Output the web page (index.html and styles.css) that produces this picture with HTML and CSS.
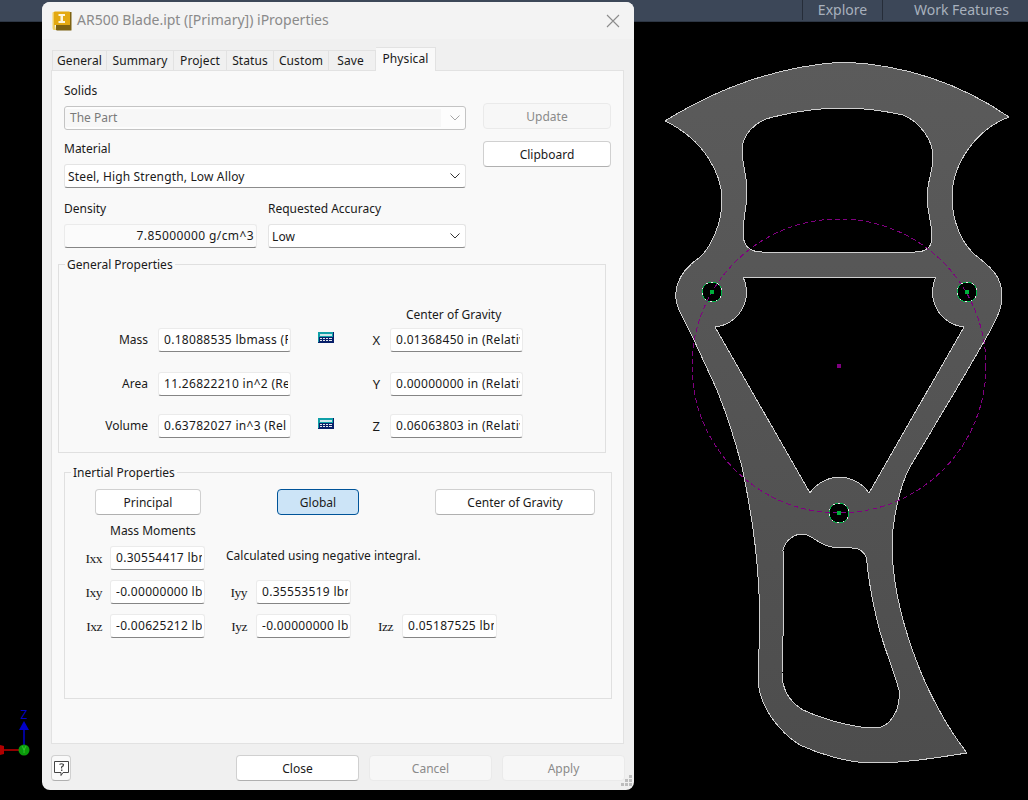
FILE: index.html
```html
<!DOCTYPE html>
<html>
<head>
    <title>AR500 Blade.ipt iProperties</title>
    <link rel="stylesheet" href="styles.css">
</head>
<body>
    <!-- Ribbon strip behind the dialog -->
    <div class="ribbon">
        <span class="ribbon-tab explore">Explore</span>
        <span class="ribbon-tab work">Work Features</span>
    </div>

    <!-- Sketch in the graphics window -->
    <svg class="sketch" width="1028" height="800" viewBox="0 0 1028 800">
        <defs>
            <linearGradient id="plate" x1="0" y1="0" x2="0" y2="1">
                <stop offset="0" stop-color="#5b5b5b"/>
                <stop offset="1" stop-color="#4d4d4d"/>
            </linearGradient>
        </defs>
        <path class="plate" fill="url(#plate)" fill-rule="evenodd" d="M665 121 Q750 68 843 62 Q935 66 1009 117 C975 130 952 165 952 197 C952 222 962 242 973 253 C985 264 1002 272 1002 296 C1002 310 995 322 985 340 L960 383 L910 467 C900 485 892 520 892 548 C893 590 903 628 920 670 C928 690 945 725 967 753 C935 758 905 763 873 763 C845 763 815 752 800 745 C785 736 772 720 767 710 C760 697 758 690 758 670 C760 640 760 600 758 577 C756 545 750 505 742 467 C735 440 725 410 717 390 L693 338 L680 312 C672 296 674 275 700 257 C710 248 722 225 722 200 C722 175 705 140 665 121 Z
        M762 252 L915 252 Q932 252 932 237 C932 222 927 212 927 197 C927 182 933 172 933 157 C933 140 920 122 903 115 C880 110 860 108 843 108 C820 108 793 112 773 117 C755 121 742 135 742 150 C742 165 747 175 747 190 C747 208 743 218 743 233 Q743 252 762 252 Z
        M743 277 L936 277 A35 35 0 0 0 964 327 L869 493 A35.5 35.5 0 0 0 810 493 L715 327 A35 35 0 0 0 743 277 Z
        M783 550 C785 540 795 534 802 534 C812 534 818 545 832 547 L852 548 C862 548 867 555 867 563 C869 585 873 603 877 620 C881 640 892 665 899 690 C901 710 890 728 875 728 C858 728 830 722 803 710 C790 702 782 690 782 673 L784 600 Z"/>
        <circle class="hole" cx="712" cy="292" r="10"/>
        <circle class="hole" cx="967" cy="292" r="10"/>
        <circle class="hole" cx="839" cy="513" r="10"/>
        <circle class="hole-dash" cx="712" cy="292" r="10"/>
        <circle class="hole-dash" cx="967" cy="292" r="10"/>
        <circle class="hole-dash" cx="839" cy="513" r="10"/>
        <circle class="bolt-circle" cx="839" cy="366" r="147"/>
        <rect class="hole-mark" x="710" y="290" width="4" height="4"/>
        <rect class="hole-mark" x="965" y="290" width="4" height="4"/>
        <rect class="hole-mark" x="837" y="511" width="4" height="4"/>
        <rect class="center-mark" x="837" y="364" width="4" height="4"/>

        <!-- Axis triad -->
        <line x1="24" y1="729" x2="24" y2="746" stroke="#0000c8" stroke-width="1.5"/>
        <polygon points="24,721 29,730 19,730" fill="#0000c8"/>
        <text class="axis-z" x="24" y="719">Z</text>
        <line x1="4" y1="750" x2="19" y2="750" stroke="#c00000" stroke-width="1.5"/>
        <polygon points="0,745 4,746 4,754 0,755" fill="#b00000"/>
        <circle cx="24" cy="750" r="5.5" fill="#0a9a0a"/>
        <text class="axis-y" x="24" y="753">Y</text>
    </svg>

    <div class="dialog">
        <div class="titlebar">
            <svg class="app-icon" width="20" height="20" viewBox="0 0 20 20">
                <path d="M4 14 H17 V1 H19.5 V19 Q19.5 19.5 19 19.5 H5 L4 19 Z" fill="#7d6212"/>
                <path d="M0.5 2 Q0.5 1 1.5 1 H3 V15 L4 19 H2 Q0.5 19 0.5 17 Z" fill="#f0cf63"/>
                <path d="M2 1 Q2 0.5 3 0.5 H17 Q18 0.5 18 1.5 V14 H2 Z" fill="#e3a912"/>
                <path d="M6.5 3 H13 V5 H11 V10 H13 V12 H6.5 V10 H8.5 V5 H6.5 Z" fill="#fdf6dc"/>
            </svg>
            <span class="title-text">AR500 Blade.ipt ([Primary]) iProperties</span>
            <svg class="close-x" width="14" height="14" viewBox="0 0 14 14">
                <path d="M1 1 L13 13 M13 1 L1 13" stroke="#8c8c8c" stroke-width="1.1" fill="none"/>
            </svg>
        </div>

        <div class="tabs">
            <span class="tab tab-general">General</span>
            <span class="tab tab-summary">Summary</span>
            <span class="tab tab-project">Project</span>
            <span class="tab tab-status">Status</span>
            <span class="tab tab-custom">Custom</span>
            <span class="tab tab-save">Save</span>
            <span class="tab tab-active">Physical</span>
        </div>

        <div class="panel">
            <div class="top-row">
                <div class="top-left">
                    <div class="label">Solids</div>
                    <div class="combo combo-disabled">
                        <span class="combo-text">The Part</span>
                        <span class="combo-arrow">
                            <svg width="10" height="6" viewBox="0 0 10 6"><path d="M0.5 0.5 L5 5 L9.5 0.5" fill="none" stroke="#a6a6a6" stroke-width="1"/></svg>
                        </span>
                    </div>
                    <div class="label label-next">Material</div>
                    <div class="combo">
                        <span class="combo-text combo-text-tight">Steel, High Strength, Low Alloy</span>
                        <span class="combo-arrow">
                            <svg width="10" height="6" viewBox="0 0 10 6"><path d="M0.5 0.5 L5 5 L9.5 0.5" fill="none" stroke="#333" stroke-width="1"/></svg>
                        </span>
                    </div>
                </div>
                <div class="top-right">
                    <button class="btn btn-disabled btn-side">Update</button>
                    <button class="btn btn-side">Clipboard</button>
                </div>
            </div>

            <div class="density-row">
                <div>
                    <div class="label">Density</div>
                    <div class="field field-right"><span>7.85000000 g/cm^3</span></div>
                </div>
                <div>
                    <div class="label">Requested Accuracy</div>
                    <div class="combo">
                        <span class="combo-text combo-text-tight">Low</span>
                        <span class="combo-arrow">
                            <svg width="10" height="6" viewBox="0 0 10 6"><path d="M0.5 0.5 L5 5 L9.5 0.5" fill="none" stroke="#333" stroke-width="1"/></svg>
                        </span>
                    </div>
                </div>
            </div>

            <fieldset class="group group-general">
                <legend>General Properties</legend>
                <div class="general-grid">
                    <div class="cog-title">Center of Gravity</div>

                    <div class="row-label">Mass</div>
                    <div class="field"><span>0.18088535 lbmass (R</span></div>
                    <div class="calc-cell">
                        <svg class="calc" width="16" height="11" viewBox="0 0 16 11">
                            <rect width="16" height="11" fill="#10a0a8"/>
                            <path d="M0 10 H16 V11 H0 Z M15 0 H16 V11 H15 Z M1 5 H15 V10 H1 Z" fill="#08206a"/>
                            <rect x="2" y="2" width="12" height="2" fill="#cfe6ea"/>
                            <path d="M2 6h2v1H2z M5 6h2v1H5z M8 6h2v1H8z M11 6h3v1h-3z M2 8h2v1H2z M5 8h2v1H5z M8 8h2v1H8z M11 8h3v1h-3z" fill="#e4e8ec"/>
                        </svg>
                    </div>
                    <div class="axis-label">X</div>
                    <div class="field"><span>0.01368450 in (Relativ</span></div>

                    <div class="row-label">Area</div>
                    <div class="field"><span>11.26822210 in^2 (Re</span></div>
                    <div class="calc-cell"></div>
                    <div class="axis-label">Y</div>
                    <div class="field"><span>0.00000000 in (Relativ</span></div>

                    <div class="row-label">Volume</div>
                    <div class="field"><span>0.63782027 in^3 (Rel</span></div>
                    <div class="calc-cell">
                        <svg class="calc" width="16" height="11" viewBox="0 0 16 11">
                            <rect width="16" height="11" fill="#10a0a8"/>
                            <path d="M0 10 H16 V11 H0 Z M15 0 H16 V11 H15 Z M1 5 H15 V10 H1 Z" fill="#08206a"/>
                            <rect x="2" y="2" width="12" height="2" fill="#cfe6ea"/>
                            <path d="M2 6h2v1H2z M5 6h2v1H5z M8 6h2v1H8z M11 6h3v1h-3z M2 8h2v1H2z M5 8h2v1H5z M8 8h2v1H8z M11 8h3v1h-3z" fill="#e4e8ec"/>
                        </svg>
                    </div>
                    <div class="axis-label">Z</div>
                    <div class="field"><span>0.06063803 in (Relativ</span></div>
                </div>
            </fieldset>

            <fieldset class="group group-inertial">
                <legend>Inertial Properties</legend>
                <div class="mode-row">
                    <button class="btn btn-principal">Principal</button>
                    <button class="btn btn-selected btn-global">Global</button>
                    <button class="btn btn-cog">Center of Gravity</button>
                </div>
                <div class="moments-title">Mass Moments</div>
                <div class="moments-grid">
                    <div class="moment-label first">Ixx</div>
                    <div class="field"><span>0.30554417 lbm</span></div>
                    <div class="negative-note">Calculated using negative integral.</div>

                    <div class="moment-label first">Ixy</div>
                    <div class="field"><span>-0.00000000 lb</span></div>
                    <div class="moment-label">Iyy</div>
                    <div class="field"><span>0.35553519 lbm</span></div>
                    <div></div>
                    <div></div>

                    <div class="moment-label first">Ixz</div>
                    <div class="field"><span>-0.00625212 lb</span></div>
                    <div class="moment-label">Iyz</div>
                    <div class="field"><span>-0.00000000 lb</span></div>
                    <div class="moment-label">Izz</div>
                    <div class="field"><span>0.05187525 lbm</span></div>
                </div>
            </fieldset>
        </div>

        <div class="footer">
            <button class="btn btn-help">
                <svg width="17" height="17" viewBox="0 0 17 17">
                    <path d="M1.5 1.5 H15.5 V12.5 H10 L8 15.5 V12.5 H1.5 Z" fill="#fff" stroke="#444" stroke-width="1"/>
                    <path d="M6.5 4.5 Q8.5 3 10.5 4.5 Q10.8 6 8.6 7 V8.5" fill="none" stroke="#444" stroke-width="1.2"/>
                    <rect x="8" y="9.5" width="1.4" height="1.4" fill="#444"/>
                </svg>
            </button>
            <button class="btn btn-foot">Close</button>
            <button class="btn btn-disabled btn-foot">Cancel</button>
            <button class="btn btn-disabled btn-foot">Apply</button>
        </div>

        <svg class="grip" width="14" height="14" viewBox="0 0 14 14">
            <path d="M10 0h3v3h-3z M6 4h3v3H6z M10 4h3v3h-3z M2 8h3v3H2z M6 8h3v3H6z M10 8h3v3h-3z" fill="#bdbdbd"/>
        </svg>
    </div>
</body>
</html>
```
FILE: styles.css
```css
html, body {
    margin: 0;
    height: 800px;
    overflow: hidden;
    background-color: #000;
    font-family: "Noto Sans", Arial, sans-serif;
    font-size: 12px;
    color: #1a1a1a;
}

button {
    font-family: inherit;
    font-size: inherit;
    color: inherit;
}

/* Ribbon strip */
.ribbon {
    display: flex;
    justify-content: flex-end;
    height: 21px;
    background-color: #3c4758;
    border-bottom: 1px solid #2d3644;
    color: #a8b1bd;
    font-size: 14px;
    line-height: 20px;
}

.ribbon-tab {
    box-sizing: border-box;
    height: 20px;
    border-left: 1px solid #262d39;
}

.explore {
    width: 80px;
    text-align: center;
}

.work {
    width: 146px;
    padding-left: 31px;
}

/* Graphics window */
.sketch {
    position: absolute;
    top: 0;
    left: 0;
}

.plate {
    stroke: #cfcfcf;
    stroke-width: 1;
    shape-rendering: crispEdges;
}

.hole {
    fill: #000;
    stroke: #e8e8e8;
    stroke-width: 1;
    shape-rendering: crispEdges;
}

.hole-dash {
    fill: none;
    stroke: #00b84a;
    stroke-width: 1;
    stroke-dasharray: 4 2;
    shape-rendering: crispEdges;
}

.bolt-circle {
    fill: none;
    stroke: #800080;
    stroke-width: 1;
    stroke-dasharray: 5 3;
    shape-rendering: crispEdges;
}

.hole-mark {
    fill: #00b03c;
}

.center-mark {
    fill: #800080;
}

.axis-z {
    fill: #0000c8;
    font-size: 12px;
    text-anchor: middle;
}

.axis-y {
    fill: #3ad03a;
    font-size: 8px;
    text-anchor: middle;
}

/* Dialog */
.dialog {
    position: absolute;
    top: 2px;
    left: 42px;
    width: 592px;
    height: 788px;
    background-color: #f0f0f0;
    border-radius: 8px;
    overflow: hidden;
}

.titlebar {
    display: flex;
    align-items: center;
    height: 37px;
    padding-left: 10px;
    background-color: #f3f3f3;
}

.app-icon {
    margin-right: 5px;
}

.title-text {
    color: #8a8a8a;
    font-size: 14px;
    line-height: 36px;
    height: 37px;
}

.close-x {
    margin-left: auto;
    margin-right: 14px;
}

.tabs {
    display: flex;
    align-items: flex-end;
    height: 31px;
    padding-left: 10px;
    letter-spacing: 0.1px;
}

.tab {
    box-sizing: border-box;
    height: 20px;
    line-height: 20px;
    text-align: center;
    background-color: #f0f0f0;
    border: 1px solid #e2e2e2;
    border-left: none;
    border-bottom: none;
}

.tab-general { width: 55px; border-left: 1px solid #e2e2e2; }
.tab-summary { width: 67px; }
.tab-project { width: 53px; }
.tab-status { width: 47px; }
.tab-custom { width: 55px; }
.tab-save { width: 47px; padding-right: 3px; }

.tab-active {
    width: 60px;
    height: 24px;
    line-height: 21px;
    margin-bottom: -1px;
    position: relative;
    background-color: #f9f9f9;
}

.panel {
    box-sizing: border-box;
    width: 573px;
    height: 674px;
    margin-left: 9px;
    padding: 12px 12px 0;
    background-color: #f9f9f9;
    border: 1px solid #e2e2e2;
}

.label {
    height: 16px;
    line-height: 16px;
    margin-bottom: 7px;
}

.label-next {
    margin-top: 11px;
}

/* Top controls */
.top-row {
    display: flex;
    gap: 17px;
}

.top-left {
    width: 402px;
}

.top-right {
    display: flex;
    flex-direction: column;
    gap: 12px;
    padding-top: 20px;
}

.combo {
    box-sizing: border-box;
    display: flex;
    align-items: center;
    height: 24px;
    background-color: #fff;
    border: 1px solid #e4e4e4;
    border-bottom-color: #8c8c8c;
    border-radius: 3px;
}

.combo-text {
    flex: 1;
    padding-left: 5px;
}

.combo-text-tight {
    padding-left: 3px;
    letter-spacing: 0.15px;
}

.combo-arrow {
    display: flex;
    justify-content: flex-end;
    width: 24px;
    padding-right: 5px;
    box-sizing: border-box;
}

.combo-disabled {
    background-color: #fdfdfd;
    border-color: #c4c4c4;
    color: #7a7a7a;
}

.combo-disabled .combo-text {
    background-color: #f7f7f7;
    height: 18px;
    line-height: 18px;
}

.btn {
    box-sizing: border-box;
    height: 26px;
    padding: 0;
    background-color: #fff;
    border: 1px solid #d0d0d0;
    border-bottom-color: #b0b0b0;
    border-radius: 4px;
}

.btn-side {
    width: 128px;
}

.btn-disabled {
    background-color: #f7f7f7;
    border-color: #eaeaea;
    color: #8a8a8a;
}

.btn-selected {
    background-color: #cce4f7;
    border-color: #005499;
}

.density-row {
    display: grid;
    grid-template-columns: 193px 198px;
    column-gap: 11px;
    margin-top: 13px;
}

/* Read only value boxes */
.field {
    box-sizing: border-box;
    height: 24px;
    line-height: 22px;
    padding: 0 2px 0 5px;
    letter-spacing: 0.3px;
    background-color: #fff;
    border: 1px solid #ebebeb;
    border-bottom-color: #858585;
    border-radius: 3px;
}

.field span {
    display: block;
    overflow: hidden;
    white-space: nowrap;
}

.field-right {
    letter-spacing: 0.4px;
    text-align: right;
    background-color: #fbfbfb;
}

/* Group boxes */
.group {
    box-sizing: border-box;
    margin: 0;
    min-width: 0;
    width: 548px;
    border: 1px solid #e0e0e0;
}

.group legend {
    height: 16px;
    line-height: 18px;
    margin-left: 6px;
    padding: 0 2px;
}

.group-general {
    margin: 8px 0 0 -6px;
    padding: 34px 0 14px;
}

.general-grid {
    display: grid;
    grid-template-columns: 99px 133px 43px 56px 133px;
    grid-template-rows: 22px 44px 42px 24px;
    align-items: start;
}

.cog-title {
    grid-column: 4 / 6;
    height: 16px;
    line-height: 18px;
    padding-left: 72px;
}

.row-label {
    grid-column: 1;
    line-height: 24px;
    padding-right: 10px;
    text-align: right;
}

.calc-cell {
    display: flex;
    justify-content: flex-end;
    padding-top: 4px;
}

.axis-label {
    font-size: 13px;
    line-height: 24px;
    padding-right: 10px;
    text-align: right;
}

.group-inertial {
    margin-top: 11px;
    padding: 9px 0 60px;
}

.mode-row {
    display: flex;
    gap: 76px;
    padding-left: 30px;
}

.btn-principal { width: 106px; }
.btn-global { width: 82px; }
.btn-cog { width: 160px; }

.moments-title {
    height: 16px;
    line-height: 18px;
    margin: 7px 0 8px 45px;
}

.moments-grid {
    display: grid;
    grid-template-columns: 45px 95px 51px 95px 51px 95px;
    row-gap: 10px;
}

.moment-label {
    box-sizing: border-box;
    height: 24px;
    padding-top: 1px;
    padding-right: 9px;
    font-family: "Liberation Serif", serif;
    font-size: 13.5px;
    line-height: 24px;
    letter-spacing: -0.5px;
    text-align: right;
}

.moment-label.first {
    padding-right: 8px;
}

.negative-note {
    grid-column: 3 / 7;
    padding-left: 21px;
    line-height: 20px;
}

/* Bottom buttons */
.footer {
    display: flex;
    gap: 10px;
    padding: 11px 9px 0;
}

.btn-help {
    display: flex;
    align-items: center;
    justify-content: center;
    width: 20px;
    margin-right: auto;
    background-color: #f9f9f9;
}

.btn-foot {
    width: 123px;
}

.grip {
    position: absolute;
    right: 1px;
    bottom: 1px;
}
```
